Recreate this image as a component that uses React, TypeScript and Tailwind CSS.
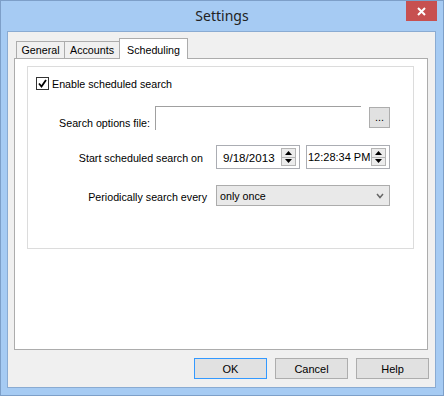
import React from 'react';

const font = { fontFamily: '"Liberation Sans", Arial, sans-serif' };

function Spin() {
  return (
    <div className="flex flex-col w-[15px] h-[18px] mr-[3px] border border-[#b5b5b5] bg-[#ececec]">
      <div className="flex-1 flex items-center justify-center border-b border-[#b5b5b5]">
        <svg width="7" height="4" viewBox="0 0 7 4"><path d="M0 4 L3.5 0 L7 4 Z" fill="#000" /></svg>
      </div>
      <div className="flex-1 flex items-center justify-center">
        <svg width="7" height="4" viewBox="0 0 7 4"><path d="M0 0 L3.5 4 L7 0 Z" fill="#000" /></svg>
      </div>
    </div>
  );
}

function Button({ label, primary }: { label: string; primary?: boolean }) {
  return (
    <div
      className={
        'w-[73px] h-[21px] flex items-center justify-center bg-[#e1e1e1] border text-[11px] text-black pt-[1px] ' +
        (primary ? 'border-[#3399ff]' : 'border-[#adadad]')
      }
    >
      {label}
    </div>
  );
}

export default function App() {
  return (
    <div
      className="relative w-[444px] h-[396px] bg-[#a6cbf3] border border-[#7d9fc8] flex flex-col text-[10.7px] text-black whitespace-nowrap"
      style={font}
    >
      {/* title bar */}
      <div className="h-[30px] flex items-center justify-center">
        <span className="text-[14px] text-[#222] pb-[2px]" style={{ fontFamily: '"Noto Sans", "Open Sans", sans-serif' }}>
          Settings
        </span>
      </div>
      <div className="absolute top-0 right-[6px] w-[31px] h-[20px] bg-[#c75050] flex items-center justify-center">
        <svg width="9" height="9" viewBox="0 0 9 9">
          <path d="M1 1 L8 8 M8 1 L1 8" stroke="#fff" strokeWidth="2" />
        </svg>
      </div>

      {/* client area */}
      <div className="flex-1 ml-[6px] mr-[7px] mb-[7px] bg-[#f0f0f0] border border-[#8aabd2] flex flex-col">
        {/* tabs */}
        <div className="flex items-end h-[20px] pl-[8px] mt-[6px]">
          <div className="w-[49px] h-[17px] border border-b-0 border-[#acacac] bg-[#f0f0f0] flex items-center justify-center pt-[1px]">
            General
          </div>
          <div className="w-[55px] h-[17px] border border-b-0 border-l-0 border-[#acacac] bg-[#f0f0f0] flex items-center justify-center pt-[1px]">
            Accounts
          </div>
          <div className="w-[69px] h-[21px] border border-b-0 border-[#acacac] bg-white flex items-start justify-center pt-[3px] -mb-[1px] relative z-10 -ml-[1px]">
            Scheduling
          </div>
        </div>

        {/* tab panel */}
        <div className="ml-[6px] mr-[7px] h-[292px] bg-white border border-[#acacac] pt-[7px] pl-[12px] pr-[13px]">
          <div className="h-[183px] border border-[#dcdcdc] flex flex-col">
            {/* checkbox row */}
            <div className="mt-[10px] ml-[8px] h-[13px] flex items-center gap-[3px]">
              <div className="w-[13px] h-[13px] border border-[#333] bg-white flex items-center justify-center">
                <svg width="9" height="9" viewBox="0 0 9 9">
                  <path d="M1 4.5 L3.5 7.5 L8 1" stroke="#000" strokeWidth="1.8" fill="none" />
                </svg>
              </div>
              <span className="pt-[1px]">Enable scheduled search</span>
            </div>

            {/* search options file */}
            <div className="mt-[16px] h-[24px] flex items-start">
              <div className="w-[122px] text-right pt-[9px]">Search options file:</div>
              <div className="ml-[5px] w-[206px] h-[24px] border-t border-l border-[#a0a0a0] bg-white" />
              <div className="ml-[8px] mt-[1px] w-[21px] h-[21px] bg-[#e1e1e1] border border-[#adadad] flex items-end justify-center pb-[4px] leading-none">
                ...
              </div>
            </div>

            {/* start date */}
            <div className="mt-[15px] h-[24px] flex items-center">
              <div className="w-[175px] text-right pt-[3px]">Start scheduled search on</div>
              <div className="ml-[13px] w-[84px] h-[24px] border border-[#abadb3] bg-white flex items-center">
                <span className="flex-1 pl-[6px] pt-[1px] text-[11.6px]">9/18/2013</span>
                <Spin />
              </div>
              <div className="ml-[6px] w-[84px] h-[24px] border border-[#abadb3] bg-white flex items-center">
                <span className="flex-1 pl-[1px] pt-[1px] text-[11px]">12:28:34 PM</span>
                <Spin />
              </div>
            </div>

            {/* periodic */}
            <div className="mt-[16px] h-[21px] flex items-center">
              <div className="w-[179px] text-right pt-[3px]">Periodically search every</div>
              <div className="ml-[9px] w-[174px] h-[21px] border border-[#acacac] bg-[#e9e9e9] flex items-center justify-between pl-[3px] pr-[5px]">
                <span className="pt-[1px]">only once</span>
                <svg width="8" height="6" viewBox="0 0 8 6">
                  <path d="M1 1 L4 4.5 L7 1" stroke="#666" strokeWidth="1.5" fill="none" />
                </svg>
              </div>
            </div>
          </div>
        </div>

        {/* buttons */}
        <div className="flex justify-end gap-[8px] mt-[8px] pr-[6px]">
          <Button label="OK" primary />
          <Button label="Cancel" />
          <Button label="Help" />
        </div>
      </div>
    </div>
  );
}
